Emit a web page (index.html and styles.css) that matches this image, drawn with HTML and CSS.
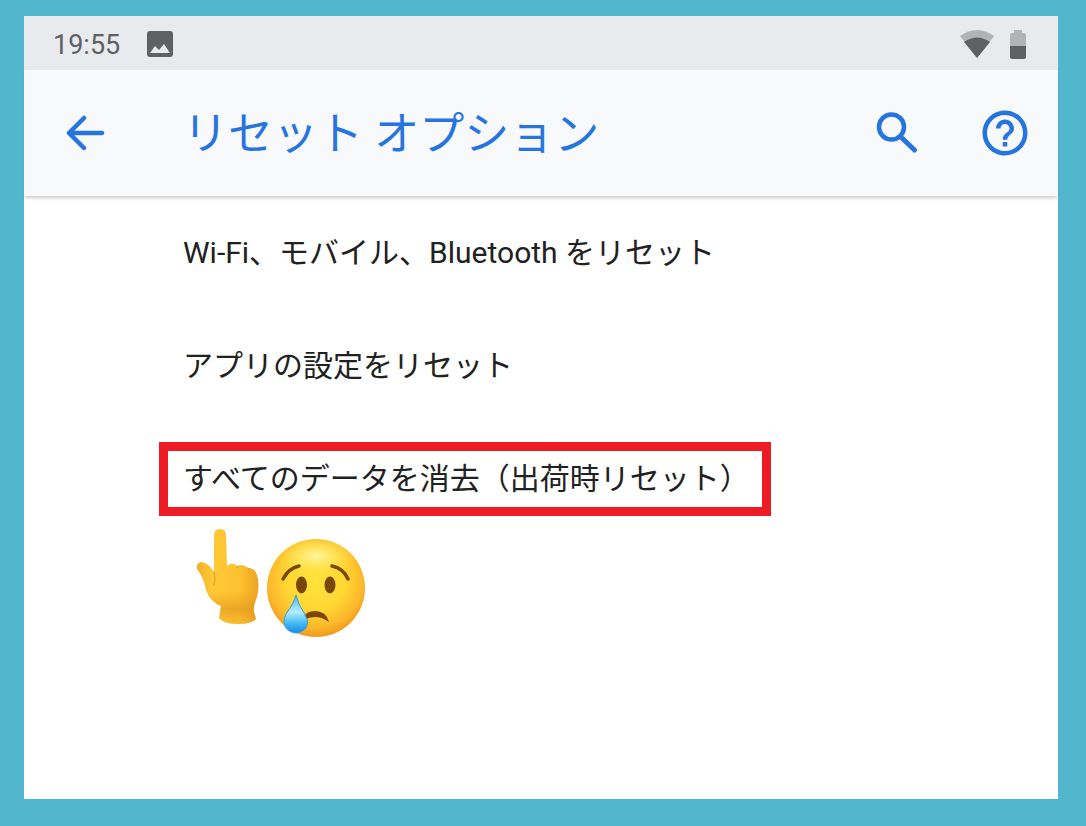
FILE: index.html
```html
<!DOCTYPE html>
<html lang="ja">
<head>
  <meta charset="UTF-8" />
  <meta name="viewport" content="width=device-width, initial-scale=1.0"/>
  <title>リセット オプション</title>
  <link rel="stylesheet" href="styles.css">
</head>
<body>

  <div class="screen">

    <!-- Status bar -->
    <div class="status-bar">
      <span class="clock">19:55</span>
      <svg class="photo-icon" viewBox="0 0 26 26" width="26" height="26" aria-hidden="true">
        <rect width="26" height="26" rx="3" fill="#5f6064"/>
        <path d="M3 22 L8 15 L12 19 L17 13 L23 22 Z" fill="#e9eaee"/>
      </svg>
      <div class="status-icons">
        <svg viewBox="0 0 34 28" width="34" height="28" aria-hidden="true">
          <path d="M0 6 Q17 -6 34 6 L17 28 Z" fill="#b2b3b6"/>
          <path d="M4 12 Q17 3 30 12 L17 28 Z" fill="#5f6064"/>
        </svg>
        <svg viewBox="0 0 16 29" width="16" height="29" aria-hidden="true">
          <path d="M4 0 H12 V3 H14 Q16 3 16 5 V17 H0 V5 Q0 3 2 3 H4 Z" fill="#b2b3b6"/>
          <path d="M0 16 H16 V27 Q16 29 14 29 H2 Q0 29 0 27 Z" fill="#5f6064"/>
        </svg>
      </div>
    </div>

    <!-- App bar -->
    <header class="app-bar">
      <button class="icon-button" type="button" aria-label="戻る">
        <svg viewBox="0 0 40 36" width="40" height="36">
          <path d="M19 3 L4 18 L19 33 M4 18 H37" fill="none" stroke="#2674de" stroke-width="4.500" stroke-linecap="round" stroke-linejoin="round"/>
        </svg>
      </button>
      <h1>リセット オプション</h1>
      <div class="actions">
        <button class="icon-button" type="button" aria-label="検索">
          <svg viewBox="0 0 42 42" width="42" height="42">
            <circle cx="15.500" cy="15" r="12.500" fill="none" stroke="#2674de" stroke-width="4.500"/>
            <path d="M24 24 L28 28" stroke="#2674de" stroke-width="4"/>
            <path d="M27 27 L38.500 38" stroke="#2674de" stroke-width="5" stroke-linecap="round"/>
          </svg>
        </button>
        <button class="icon-button" type="button" aria-label="ヘルプ">
          <svg viewBox="0 0 24 24" width="54" height="54">
            <path fill="#2674de" d="M11 18h2v-2h-2v2zm1-16C6.480 2 2 6.480 2 12s4.480 10 10 10 10-4.480 10-10S17.520 2 12 2zm0 18c-4.410 0-8-3.590-8-8s3.590-8 8-8 8 3.590 8 8-3.590 8-8 8zm0-14c-2.210 0-4 1.790-4 4h2c0-1.100.9-2 2-2s2 .9 2 2c0 2-3 1.750-3 5h2c0-2.250 3-2.500 3-5 0-2.210-1.790-4-4-4z"/>
          </svg>
        </button>
      </div>
    </header>

    <!-- Reset options -->
    <main class="content">
      <ul class="options">
        <li><a class="option" href="#">Wi-Fi、モバイル、Bluetooth をリセット</a></li>
        <li><a class="option" href="#">アプリの設定をリセット</a></li>
        <li><a class="option highlight" href="#">すべてのデータを消去（出荷時リセット）</a></li>
      </ul>

      <div class="reaction">
        <svg viewBox="0 0 64 110" width="64" height="110" role="img" aria-label="上を指す手">
          <defs>
            <linearGradient id="skin" x1="0" y1="0" x2="1" y2="0">
              <stop offset="0" stop-color="#f3ae28"/>
              <stop offset="0.250" stop-color="#ffc936"/>
              <stop offset="0.700" stop-color="#fdc130"/>
              <stop offset="1" stop-color="#eca422"/>
            </linearGradient>
            <linearGradient id="wrist" x1="0" y1="0" x2="0" y2="1">
              <stop offset="0.650" stop-color="#e49a1c" stop-opacity="0"/>
              <stop offset="0.840" stop-color="#dc9019" stop-opacity="0.550"/>
              <stop offset="1" stop-color="#e9a11f" stop-opacity="0.200"/>
            </linearGradient>
          </defs>
          <path d="M18 7 Q18 1 24 1 Q30 1 30 7 L31 38 Q36 33 41 38 Q47 35 52 40 Q59 40 61 47 Q64 57 61 69 Q57 78 58 84 L60 91 Q56 96 42 96 Q28 96 23 90 L25 78 Q14 74 10 62 Q8 50 1 41 Q0 35 5 34 Q12 34 18 44 Z" fill="url(#skin)"/>
          <path d="M18 7 Q18 1 24 1 Q30 1 30 7 L31 38 Q36 33 41 38 Q47 35 52 40 Q59 40 61 47 Q64 57 61 69 Q57 78 58 84 L60 91 Q56 96 42 96 Q28 96 23 90 L25 78 Q14 74 10 62 Q8 50 1 41 Q0 35 5 34 Q12 34 18 44 Z" fill="url(#wrist)"/>
          <path d="M18 44 Q20 50 18 57" fill="none" stroke="#dc9820" stroke-width="1" stroke-linecap="round"/>
          <path d="M41 38 L42 40 M52 40 L53 42" fill="none" stroke="#dc9820" stroke-width="1" stroke-linecap="round"/>
        </svg>
        <svg viewBox="0 0 100 100" width="100" height="100" role="img" aria-label="泣き顔">
          <defs>
            <radialGradient id="face" cx="0.500" cy="0.420" r="0.600">
              <stop offset="0" stop-color="#ffe23b"/>
              <stop offset="0.500" stop-color="#ffd733"/>
              <stop offset="0.800" stop-color="#fcb82b"/>
              <stop offset="1" stop-color="#ee931c"/>
            </radialGradient>
            <radialGradient id="shine" cx="0.500" cy="0.400" r="0.500">
              <stop offset="0" stop-color="#fff9b0" stop-opacity="0.900"/>
              <stop offset="1" stop-color="#ffe84a" stop-opacity="0"/>
            </radialGradient>
            <linearGradient id="tear" x1="0" y1="0" x2="0" y2="1">
              <stop offset="0" stop-color="#4db4ee"/>
              <stop offset="0.450" stop-color="#b5edff"/>
              <stop offset="0.750" stop-color="#42b8f4"/>
              <stop offset="1" stop-color="#168de0"/>
            </linearGradient>
          </defs>
          <circle cx="50" cy="50" r="49" fill="url(#face)"/>
          <ellipse cx="50" cy="22" rx="40" ry="20" fill="url(#shine)"/>
          <path d="M17 41 Q23 30 33 28 M66 28 Q77 30 82 41" fill="none" stroke="#7b4708" stroke-width="3.500" stroke-linecap="round"/>
          <ellipse cx="35.500" cy="47" rx="5.500" ry="8.500" fill="#7b4708"/>
          <ellipse cx="64" cy="47" rx="5.500" ry="8.500" fill="#7b4708"/>
          <path d="M37 80 Q40 73 49 73 Q60 73 63 84 Q56 79 49 79 Q43 79 38 82 Z" fill="#7b4708"/>
          <path d="M30 57 Q32 66 38 75 Q45 86 38 92 Q30 98 22 92 Q15 86 20 76 Q28 65 30 57 Z" fill="url(#tear)" stroke="#2b9ee6" stroke-width="1"/>
        </svg>
      </div>
    </main>

  </div>

</body>
</html>
```
FILE: styles.css
```css
* {
  box-sizing: border-box;
}

body {
  margin: 0;
  min-height: 100vh;
  padding: 16px 28px 27px 24px;
  display: flex;
  background: #52b6cd;
  font-family: Roboto, "Noto Sans CJK JP", sans-serif;
  color: #212121;
}

.screen {
  flex: 1;
  background: #fff;
}

.status-bar {
  display: flex;
  align-items: center;
  height: 54px;
  padding: 2px 32px 0 29px;
  background: #e9eaee;
}

.clock {
  padding-top: 2px;
  font-size: 27px;
  color: #5f6064;
}

.photo-icon {
  margin-left: 27px;
}

.status-icons {
  display: flex;
  align-items: center;
  gap: 16px;
  margin-left: auto;
}

.app-bar {
  display: flex;
  align-items: center;
  height: 126px;
  padding: 0 26px 0 41px;
  background: #f8f9fb;
  box-shadow: 0 3px 3px -1px rgba(80, 50, 65, 0.25);
}

.app-bar h1 {
  margin: 0 0 0 78px;
  padding-top: 4px;
  font-size: 45px;
  font-weight: 400;
  line-height: 60px;
  color: #2674de;
}

.actions {
  display: flex;
  align-items: center;
  gap: 60px;
  margin-left: auto;
}

.icon-button {
  display: flex;
  padding: 0;
  border: none;
  background: none;
  cursor: pointer;
}

.content {
  padding: 20px 16px 20px 159px;
}

.options {
  display: flex;
  flex-direction: column;
  align-items: flex-start;
  gap: 39px;
  margin: 0;
  padding: 0;
  list-style: none;
}

.option {
  display: flex;
  align-items: center;
  min-height: 74px;
  font-size: 30px;
  line-height: 40px;
  color: inherit;
  text-decoration: none;
}

.highlight {
  margin-left: -24px;
  padding: 0 12px 0 15px;
  border: 9px solid #ed1b24;
}

.reaction {
  display: flex;
  align-items: flex-end;
  gap: 6px;
  margin: 12px 0 0 13px;
}
```
